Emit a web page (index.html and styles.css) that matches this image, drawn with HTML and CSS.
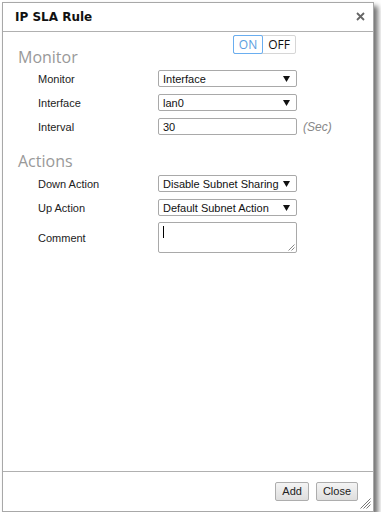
FILE: index.html
```html
<!DOCTYPE html>
<html>
<head>
<meta charset="utf-8">
<link rel="stylesheet" href="styles.css">
</head>
<body>
<div class="dialog">
  <div class="header">
    <span class="title">IP SLA Rule</span>
    <svg class="close" width="9" height="9" viewBox="0 0 9 9"><path d="M1 1 L8 8 M8 1 L1 8" stroke="#666" stroke-width="1.8"/></svg>
  </div>
  <div class="content">
    <div class="toggle-row">
      <div class="toggle"><span class="on">ON</span><span class="off">OFF</span></div>
    </div>
    <div class="section">Monitor</div>
    <div class="row"><span class="label">Monitor</span><div class="select">Interface<svg class="arrow" width="7" height="6" viewBox="0 0 7 6"><path d="M0 0 H7 L3.5 6 Z" fill="#111"/></svg></div></div>
    <div class="row"><span class="label">Interface</span><div class="select">lan0<svg class="arrow" width="7" height="6" viewBox="0 0 7 6"><path d="M0 0 H7 L3.5 6 Z" fill="#111"/></svg></div></div>
    <div class="row"><span class="label">Interval</span><div class="input">30</div><span class="unit">(Sec)</span></div>
    <div class="section actions">Actions</div>
    <div class="row"><span class="label">Down Action</span><div class="select">Disable Subnet Sharing<svg class="arrow" width="7" height="6" viewBox="0 0 7 6"><path d="M0 0 H7 L3.5 6 Z" fill="#111"/></svg></div></div>
    <div class="row"><span class="label">Up Action</span><div class="select">Default Subnet Action<svg class="arrow" width="7" height="6" viewBox="0 0 7 6"><path d="M0 0 H7 L3.5 6 Z" fill="#111"/></svg></div></div>
    <div class="row comment-row"><span class="label">Comment</span><div class="textarea"><span class="caret"></span>
      <svg class="grip-small" width="7" height="7" viewBox="0 0 7 7"><path d="M6.5 0.5 L0.5 6.5 M6.5 3.5 L3.5 6.5" stroke="#888" stroke-width="1"/></svg></div></div>
  </div>
  <div class="footer">
    <button class="btn">Add</button>
    <button class="btn">Close</button>
  </div>
  <svg class="grip" width="11" height="11" viewBox="0 0 11 11"><path d="M10.5 0.5 L0.5 10.5 M10.5 3.5 L3.5 10.5 M10.5 6.5 L6.5 10.5" stroke="#777" stroke-width="1"/></svg>
</div>
</body>
</html>
```
FILE: styles.css
```css
html, body { margin: 0; padding: 0; background: #fff; }
body { padding: 2px 0 0 2px; font-family: "Liberation Sans", Arial, sans-serif; font-size: 11px; color: #222; }
.dialog {
  position: relative;
  box-sizing: border-box;
  width: 372px; height: 510px;
  border: 1px solid #a8a8a8;
  background: #fff;
  box-shadow: 4px 4px 5px rgba(0,0,0,0.55);
  display: flex; flex-direction: column;
}
.header {
  height: 29px; box-sizing: border-box; flex: none;
  border-bottom: 1px solid #b0b0b0;
  display: flex; align-items: center; justify-content: space-between;
  padding: 0 8px 1px 12px;
}
.title { font-family: "DejaVu Sans", sans-serif; font-weight: bold; font-size: 12px; color: #111; }
.close { display: block; }
.content { flex: 1; padding: 3px 0 0 15px; }
.toggle-row { display: flex; padding-left: 215px; }
.toggle { display: flex; border: 1px solid #d6d6d6; border-radius: 2px; height: 19px; box-sizing: border-box; }
.toggle span { display: flex; align-items: center; justify-content: center; font-size: 12px; font-family: "Open Sans", sans-serif; }
.on { width: 28px; border: 1px solid #6aaef0; color: #5a9ee0; margin: -1px 0 -1px -1px; border-radius: 2px; }
.off { width: 32px; color: #111; }
.section { font-family: "Open Sans", sans-serif; font-size: 16px; color: #999; margin-top: -6px; height: 18px; line-height: 18px; margin-bottom: 4px; }
.section.actions { margin-top: 17px; margin-bottom: 5px; }
.row { display: flex; align-items: center; height: 17px; margin-bottom: 7px; }
.label { width: 140px; padding-left: 20px; box-sizing: border-box; color: #222; }
.select, .input, .textarea {
  box-sizing: border-box; width: 139px; height: 17px;
  border: 1px solid #a9a9a9; border-radius: 2px;
  display: flex; align-items: center; padding-left: 4px;
  font-size: 11px; color: #111; position: relative;
}
.arrow { position: absolute; right: 6px; top: 5px; }
.unit { font-style: italic; color: #888; margin-left: 6px; font-size: 12px; }
.comment-row { height: 31px; margin-top: -1px; }
.textarea { height: 31px; align-items: flex-start; padding: 3px 4px; }
.caret { width: 1px; height: 12px; background: #000; }
.grip-small { position: absolute; right: 1px; bottom: 1px; }
.footer {
  height: 40px; box-sizing: border-box; flex: none;
  border-top: 1px solid #b0b0b0;
  display: flex; justify-content: flex-end; align-items: flex-start;
  gap: 7px; padding: 10px 15px 0 0;
}
.btn {
  font-family: "Liberation Sans", Arial, sans-serif; font-size: 11px; color: #222;
  height: 19px; padding: 0 6px; border: 1px solid #adadad; border-radius: 2px;
  background: linear-gradient(#f4f4f4, #dedede); line-height: 15px;
}
.grip { position: absolute; right: 2px; bottom: 2px; }
```
